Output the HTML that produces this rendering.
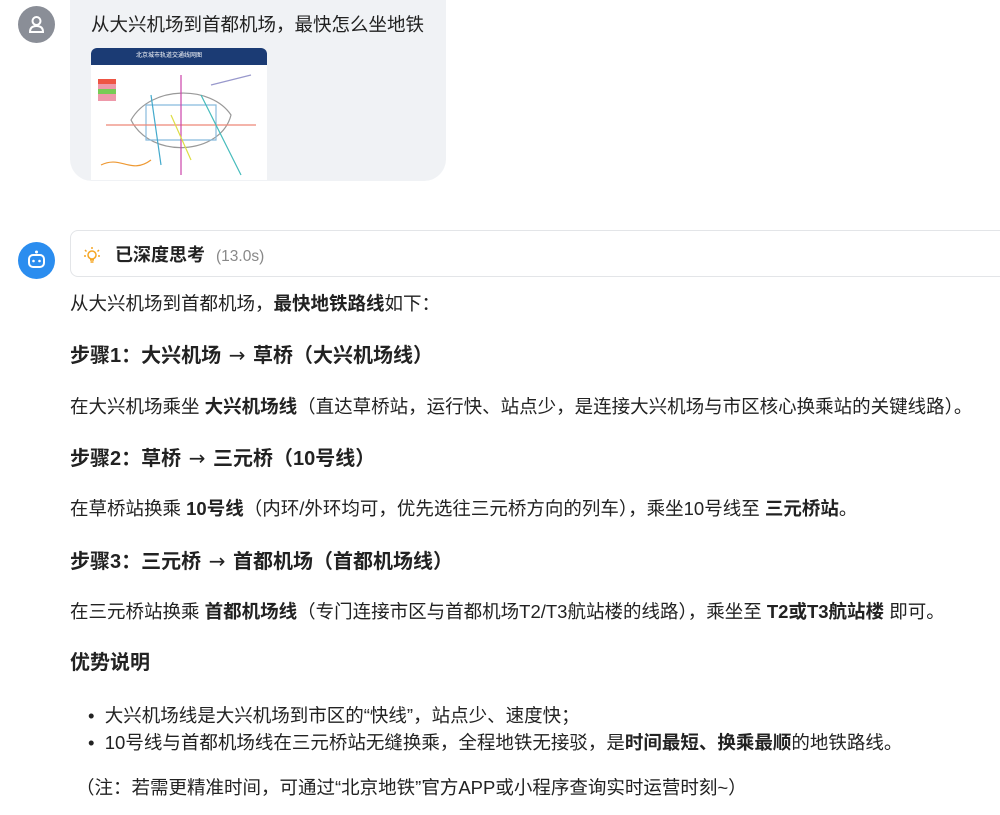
<!DOCTYPE html>
<html><head><meta charset="utf-8"><style>
body{margin:0;width:1000px;height:815px;background:#fff;font-family:"Liberation Sans","Noto Sans CJK SC",sans-serif;color:#222;position:relative;overflow:hidden}
.a{position:absolute}
.t{position:absolute;left:70px;font-size:18.5px;line-height:24px;white-space:nowrap}
.h{font-weight:bold;font-size:20px}
.h i{font-style:normal;font-family:"DejaVu Sans",sans-serif;font-weight:normal;font-size:20px;margin:0 2px}
b{font-weight:bold}
</style></head><body>
<div class="a" style="left:18px;top:6px;width:37px;height:37px;border-radius:50%;background:#8a8e97">
<svg width="37" height="37" viewBox="0 0 37 37"><circle cx="18.5" cy="15" r="4" fill="none" stroke="#fff" stroke-width="2"/><path d="M12 26 q0-6 6.5-6 q6.5 0 6.5 6 z" fill="none" stroke="#fff" stroke-width="2"/></svg></div>
<div class="a" style="left:70px;top:0;width:376px;height:181px;background:#f0f2f5;border-radius:0 0 22px 22px"></div>
<div class="a" style="left:91px;top:13px;font-size:18.5px;line-height:24px;color:#222">从大兴机场到首都机场，最快怎么坐地铁</div>
<div class="a" style="left:91px;top:48px;width:176px;height:132px;background:#fff;border-radius:6px 6px 0 0;overflow:hidden">
<div style="height:17px;background:#1b3b74;color:#fff;font-size:6px;line-height:17px;padding-left:45px">北京城市轨道交通线网图</div>
<svg width="176" height="115" viewBox="0 0 176 115">
<rect x="7" y="14" width="18" height="22" fill="#e9a"/><rect x="7" y="14" width="18" height="5" fill="#e54"/><rect x="7" y="24" width="18" height="5" fill="#7c5"/>
<g fill="none" stroke-width="1.2">
<path d="M40 55 C60 20 120 20 140 50 C130 90 60 95 40 55Z" stroke="#999"/>
<path d="M55 40 h70 v35 h-70z" stroke="#8bd"/>
<path d="M15 60 H165" stroke="#e87"/><path d="M90 10 V110" stroke="#c4a"/>
<path d="M60 30 L70 100" stroke="#4ac"/><path d="M110 30 L150 110" stroke="#4bb"/>
<path d="M10 100 C30 90 40 110 60 95" stroke="#e93"/><path d="M120 20 L160 10" stroke="#99c"/>
<path d="M80 50 L100 95" stroke="#dd4"/>
</g></svg></div>
<div class="a" style="left:18px;top:242px;width:37px;height:37px;border-radius:50%;background:#2b8def">
<svg width="37" height="37" viewBox="0 0 37 37"><rect x="11" y="13" width="15" height="12" rx="4" fill="none" stroke="#fff" stroke-width="2"/><circle cx="18.5" cy="10" r="1.5" fill="#fff"/><circle cx="15.5" cy="19" r="1.3" fill="#fff"/><circle cx="21.5" cy="19" r="1.3" fill="#fff"/></svg></div>
<div class="a" style="left:70px;top:230px;width:940px;height:47px;border:1px solid #e3e5e8;border-radius:8px;box-sizing:border-box"></div>
<svg class="a" style="left:82px;top:245px" width="20" height="20" viewBox="0 0 20 20"><g stroke="#f5a623" stroke-width="1.5" fill="none"><circle cx="10" cy="10" r="4"/><path d="M8 15h4M8.5 17h3M10 2v2M3 5l1.5 1.5M17 5l-1.5 1.5M2 11h2M16 11h2"/></g></svg>
<div class="a" style="left:115px;top:243px;font-size:18px;font-weight:bold;line-height:24px">已深度思考 <span style="font-weight:normal;font-size:15.5px;color:#888;margin-left:6px">(13.0s)</span></div>
<div class="t" style="top:292px">从大兴机场到首都机场，<b>最快地铁路线</b>如下：</div>
<div class="t h" style="top:343px">步骤1：大兴机场 <i>→</i> 草桥（大兴机场线）</div>
<div class="t" style="top:395px">在大兴机场乘坐 <b>大兴机场线</b>（直达草桥站，运行快、站点少，是连接大兴机场与市区核心换乘站的关键线路）。</div>
<div class="t h" style="top:446px">步骤2：草桥 <i>→</i> 三元桥（10号线）</div>
<div class="t" style="top:497px">在草桥站换乘 <b>10号线</b>（内环/外环均可，优先选往三元桥方向的列车），乘坐10号线至 <b>三元桥站</b>。</div>
<div class="t h" style="top:549px">步骤3：三元桥 <i>→</i> 首都机场（首都机场线）</div>
<div class="t" style="top:600px">在三元桥站换乘 <b>首都机场线</b>（专门连接市区与首都机场T2/T3航站楼的线路），乘坐至 <b>T2或T3航站楼</b> 即可。</div>
<div class="t h" style="top:651px">优势说明</div>
<div class="t" style="top:704px;left:88px">•&nbsp;&nbsp;大兴机场线是大兴机场到市区的“快线”，站点少、速度快；</div>
<div class="t" style="top:731px;left:88px">•&nbsp;&nbsp;10号线与首都机场线在三元桥站无缝换乘，全程地铁无接驳，是<b>时间最短、换乘最顺</b>的地铁路线。</div>
<div class="t" style="top:776px;left:76px">（注：若需更精准时间，可通过“北京地铁”官方APP或小程序查询实时运营时刻~）</div>
</body></html>
